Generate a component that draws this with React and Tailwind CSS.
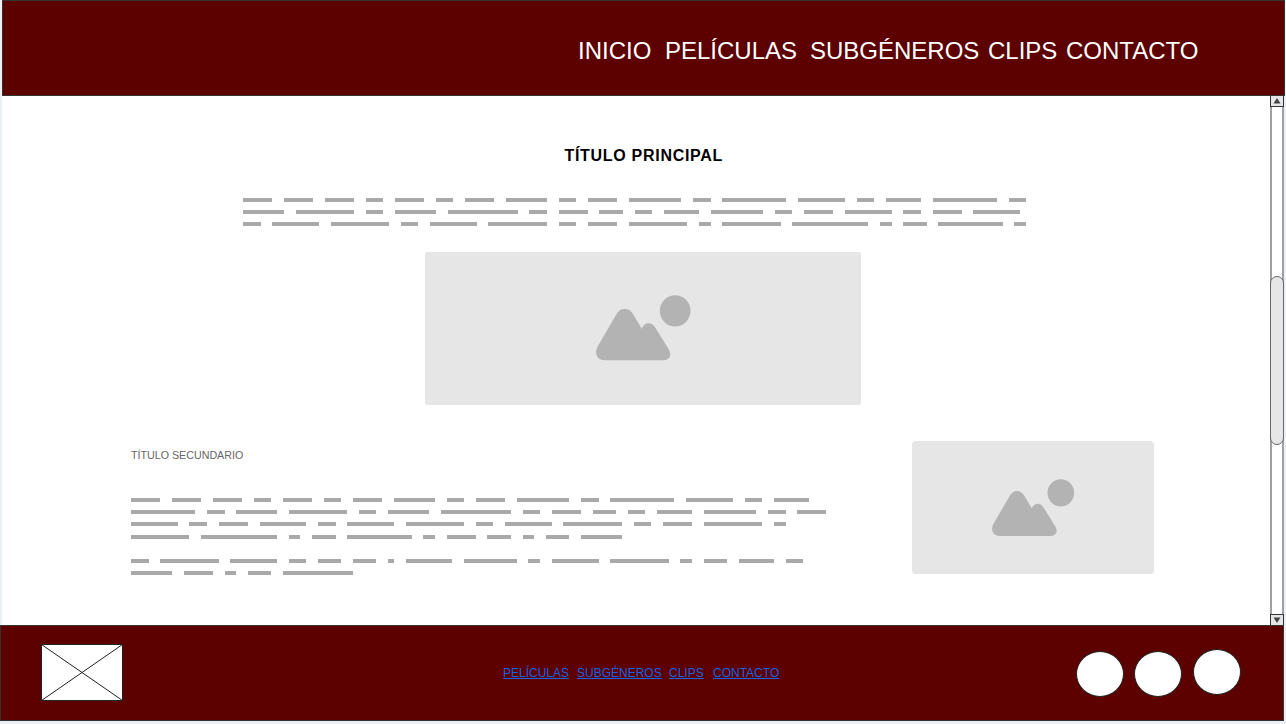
const INTRO = [
  [5, 5, 5, 3, 5, 3, 5, 7, 3, 5, 9, 3, 11, 8, 3, 6, 11, 3],
  [7, 10, 3, 7, 12, 3, 5, 4, 3, 6, 9, 3, 5, 8, 3, 5, 8],
  [3, 8, 10, 3, 8, 10, 3, 5, 10, 2, 10, 13, 2, 4, 11, 2],
];

const BODY_TOP = [
  [5, 5, 5, 3, 5, 3, 5, 7, 3, 5, 9, 3, 11, 8, 3, 6],
  [11, 3, 7, 10, 3, 7, 12, 3, 5, 4, 3, 6, 9, 3, 5],
  [8, 3, 5, 8, 3, 8, 10, 3, 8, 10, 3, 5, 10, 2],
];

const BODY_LAST = [[10, 13, 2, 4, 11, 2, 5, 4, 2, 4, 7]];

const BODY_END = [
  [3, 10, 8, 3, 4, 4, 1, 8, 9, 2, 8, 10, 2, 4, 6, 3],
  [7, 5, 2, 4, 12],
];

const UNIT = 5.845;

function Lines({ rows, className = "" }) {
  return (
    <div className={`flex flex-col gap-2 ${className}`}>
      {rows.map((row, i) => (
        <div key={i} className="flex h-1 gap-[11.69px]">
          {row.map((n, j) => (
            <span key={j} className="h-full shrink-0 bg-[#a9a9a9]" style={{ width: n * UNIT }} />
          ))}
        </div>
      ))}
    </div>
  );
}

function Landscape({ className }) {
  return (
    <svg viewBox="47 46 284 196" className={`overflow-visible ${className}`} fill="#b3b3b3">
      <ellipse cx="284.5" cy="93.5" rx="46" ry="47" />
      <path d="M51 202 L107 106 Q117 87 133 87 Q149 87 160 106 L184 147 Q192 131 205 131 Q217 131 226 146 L266 210 Q272 220 269 230 Q264 242 249 242 L75 242 Q57 242 50 229 Q44 216 51 202 Z" />
    </svg>
  );
}

function ArrowButton({ down = false }) {
  return (
    <div className="flex h-[12px] w-full shrink-0 items-center justify-center border border-[#333] bg-[#e6e6e6]">
      <svg viewBox="0 0 8 6" className="h-[6px] w-[8px]" fill="#444">
        <path d={down ? "M0.5 0.5h7L4 6z" : "M0.5 5.5h7L4 0z"} />
      </svg>
    </div>
  );
}

export default function App() {
  return (
    <div className="flex h-[724px] w-[1286px] flex-col overflow-hidden bg-[#edf1f6] font-['Liberation_Sans',Arial,sans-serif]">
      <header className="ml-[1.5px] flex h-[96px] w-[1283px] shrink-0 border border-[#333] bg-[#5c0000] pl-[575.5px] pt-[36px] text-2xl leading-[28px] text-white">
        <a className="w-[87px] shrink-0">INICIO</a>
        <a className="w-[145px] shrink-0">PELÍCULAS</a>
        <a className="w-[178px] shrink-0">SUBGÉNEROS</a>
        <a className="w-[78px] shrink-0">CLIPS</a>
        <a className="shrink-0">CONTACTO</a>
      </header>

      <div className="ml-[2px] flex h-[529px] w-[1282px] shrink-0 bg-white">
        <main className="flex w-[1268px] shrink-0 flex-col">
          <h1 className="ml-[562.5px] mt-[50px] h-5 whitespace-nowrap text-base font-bold leading-5 tracking-[0.7px] text-black">
            TÍTULO PRINCIPAL
          </h1>
          <Lines rows={INTRO} className="ml-[241px] mt-[32px]" />
          <div className="ml-[423px] mt-[25.5px] flex h-[153px] w-[436px] shrink-0 items-center justify-center rounded-[2px] bg-[#e6e6e6]">
            <Landscape className="h-[65.3px] w-[94.7px]" />
          </div>
          <section className="mt-[36.5px] flex">
            <div className="ml-[129px] w-[781px] shrink-0">
              <h2 className="mt-[6px] h-4 text-[10.7px] leading-4 text-[#666]">TÍTULO SECUNDARIO</h2>
              <Lines rows={BODY_TOP} className="mt-[35px]" />
              <Lines rows={BODY_LAST} className="mt-[9px]" />
              <Lines rows={BODY_END} className="mt-5" />
            </div>
            <div className="flex h-[133px] w-[242px] shrink-0 items-center justify-center rounded-[4px] bg-[#e6e6e6]">
              <Landscape className="h-[57px] w-[82.3px]" />
            </div>
          </section>
        </main>
        <aside className="-mt-[1px] flex h-[531px] w-[14px] shrink-0 flex-col justify-between">
          <ArrowButton />
          <div className="flex w-full flex-1 flex-col border-l-2 border-r-2 border-[#a0a0a0] bg-white">
            <div className="-mx-[2px] mt-[169px] h-[169px] rounded-[7px] border border-[#666] bg-[#e6e6e6]" />
          </div>
          <ArrowButton down />
        </aside>
      </div>

      <footer className="flex h-[96px] w-[1284px] shrink-0 border border-[#333] bg-[#5c0000]">
        <svg viewBox="0 0 82 57" className="ml-[39.5px] mt-[18px] h-[57px] w-[82px] shrink-0" fill="white" stroke="#222">
          <rect x="0.5" y="0.5" width="81" height="56" />
          <path d="M0.5 0.5L81.5 56.5M81.5 0.5L0.5 56.5" />
        </svg>
        <nav className="ml-[380.5px] mt-[39px] flex h-4 w-[572.5px] shrink-0 text-xs leading-4 text-[#1763e0] underline">
          <span className="w-[74px] shrink-0">PELÍCULAS</span>
          <span className="w-[92px] shrink-0">SUBGÉNEROS</span>
          <span className="w-[44px] shrink-0">CLIPS</span>
          <span className="shrink-0">CONTACTO</span>
        </nav>
        <div className="flex gap-[10.7px]">
          <span className="mt-[25px] h-[46px] w-[48px] shrink-0 rounded-[50%] border border-[#222] bg-white" />
          <span className="mt-[25px] h-[46px] w-[48px] shrink-0 rounded-[50%] border border-[#222] bg-white" />
          <span className="mt-[23px] h-[46px] w-[48px] shrink-0 rounded-[50%] border border-[#222] bg-white" />
        </div>
      </footer>
    </div>
  );
}
